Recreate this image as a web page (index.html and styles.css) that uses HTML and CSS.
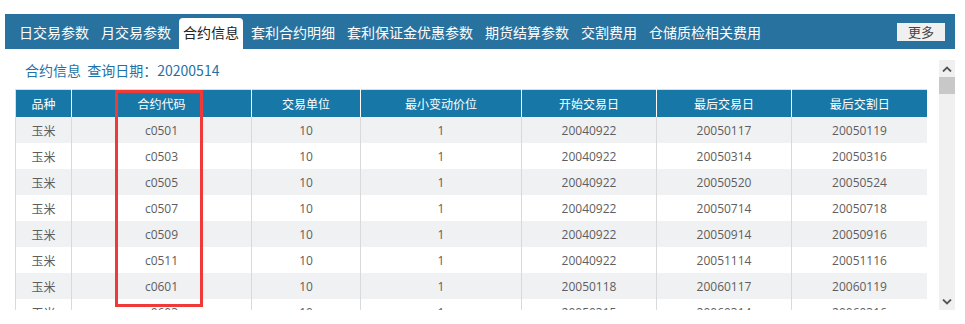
FILE: index.html
```html
<!DOCTYPE html>
<html lang="zh-CN">
<head>
<meta charset="utf-8">
<title>合约信息</title>
<link rel="stylesheet" href="styles.css">
</head>
<body>
<div class="nav">
  <span class="tab">日交易参数</span>
  <span class="tab">月交易参数</span>
  <span class="tab active">合约信息</span>
  <span class="tab">套利合约明细</span>
  <span class="tab">套利保证金优惠参数</span>
  <span class="tab">期货结算参数</span>
  <span class="tab">交割费用</span>
  <span class="tab">仓储质检相关费用</span>
  <span class="more">更多</span>
</div>
<div class="main">
  <div class="content">
    <div class="title">合约信息&nbsp;&nbsp;查询日期：20200514</div>
    <div class="table-wrap">
      <table class="grid">
        <colgroup>
          <col class="c1"><col class="c2"><col class="c3"><col class="c4"><col class="c5"><col class="c6"><col class="c7">
        </colgroup>
        <thead>
          <tr><th>品种</th><th>合约代码</th><th>交易单位</th><th>最小变动价位</th><th>开始交易日</th><th>最后交易日</th><th>最后交割日</th></tr>
        </thead>
        <tbody>
          <tr><td>玉米</td><td>c0501</td><td>10</td><td>1</td><td>20040922</td><td>20050117</td><td>20050119</td></tr>
          <tr><td>玉米</td><td>c0503</td><td>10</td><td>1</td><td>20040922</td><td>20050314</td><td>20050316</td></tr>
          <tr><td>玉米</td><td>c0505</td><td>10</td><td>1</td><td>20040922</td><td>20050520</td><td>20050524</td></tr>
          <tr><td>玉米</td><td>c0507</td><td>10</td><td>1</td><td>20040922</td><td>20050714</td><td>20050718</td></tr>
          <tr><td>玉米</td><td>c0509</td><td>10</td><td>1</td><td>20040922</td><td>20050914</td><td>20050916</td></tr>
          <tr><td>玉米</td><td>c0511</td><td>10</td><td>1</td><td>20040922</td><td>20051114</td><td>20051116</td></tr>
          <tr><td>玉米</td><td>c0601</td><td>10</td><td>1</td><td>20050118</td><td>20060117</td><td>20060119</td></tr>
          <tr><td>玉米</td><td>c0603</td><td>10</td><td>1</td><td>20050315</td><td>20060314</td><td>20060316</td></tr>
          <tr><td>玉米</td><td>c0605</td><td>10</td><td>1</td><td>20050517</td><td>20060516</td><td>20060518</td></tr>
        </tbody>
      </table>
    </div>
  </div>
  <div class="scrollbar">
    <div class="sb-btn"><svg width="10" height="6" viewBox="0 0 10 6"><path d="M1 5.5 L5 1.5 L9 5.5" fill="none" stroke="#555" stroke-width="1.8"/></svg></div>
    <div class="sb-thumb"></div>
    <div class="sb-track"></div>
    <div class="sb-btn"><svg width="10" height="6" viewBox="0 0 10 6"><path d="M1 0.5 L5 4.5 L9 0.5" fill="none" stroke="#555" stroke-width="1.8"/></svg></div>
  </div>
  <div class="highlight"></div>
</div>
</body>
</html>
```

FILE: styles.css
```css
html, body {
  margin: 0;
  padding: 0;
  background: #fff;
  font-family: "Noto Sans CJK SC", "Open Sans", sans-serif;
}

.nav {
  margin: 14px 10px 0 5px;
  height: 35px;
  background: #28729f;
  display: flex;
  align-items: flex-end;
  padding-left: 10px;
  box-sizing: border-box;
}

.tab {
  height: 31px;
  line-height: 29px;
  padding: 0 4px;
  margin-right: 4px;
  color: #fff;
  font-size: 14px;
  white-space: nowrap;
}

.tab.active {
  background: #fff;
  color: #222;
  border-radius: 4px 4px 0 0;
}

.more {
  margin-left: auto;
  align-self: center;
  margin-right: 10px;
  width: 48px;
  height: 18px;
  line-height: 18px;
  text-align: center;
  background: #f0f0f0;
  color: #444;
  font-size: 13px;
  margin-top: 1px;
}

.main {
  position: relative;
  margin: 11px 10px 0 15px;
  height: 250px;
  display: flex;
}

.content {
  flex: 1;
  padding-right: 12px;
  overflow: hidden;
}

.title {
  height: 29px;
  line-height: 20px;
  padding-left: 10px;
  color: #1f72a6;
  font-size: 14px;
}

.table-wrap {
  height: 221px;
  overflow: hidden;
}

.grid {
  width: 912px;
  table-layout: fixed;
  border-collapse: collapse;
  border-top: 1px solid #dcdcdc;
  font-family: "Open Sans", "Noto Sans CJK SC", sans-serif;
  font-size: 12px;
}

.c1 { width: 56px; }
.c2 { width: 180px; }
.c3 { width: 109px; }
.c4 { width: 161px; }
.c5 { width: 135px; }
.c6 { width: 135px; }
.c7 { width: 136px; }

.grid th {
  height: 27px;
  padding: 0;
  background: #1778a8;
  color: #fff;
  font-weight: normal;
  border-left: 1px solid #fff;
  font-family: "Noto Sans CJK SC", sans-serif;
  font-size: 12px;
}

.grid th:first-child {
  border-left: 1px solid #dcdcdc;
}

.grid td {
  height: 26px;
  padding: 0;
  text-align: center;
  color: #5e5e5e;
  border-left: 1px solid #d9d9d9;
  border-right: 1px solid #d9d9d9;
}

.grid td:first-child {
  font-family: "Noto Sans CJK SC", sans-serif;
}

.grid tbody tr:nth-child(odd) td {
  background: #f0f1f3;
}

.scrollbar {
  width: 16px;
  background: #f0f0f0;
  display: flex;
  flex-direction: column;
}

.sb-btn {
  height: 17px;
  display: flex;
  align-items: center;
  justify-content: center;
}

.sb-thumb {
  height: 17px;
  background: #c8c8c8;
}

.sb-track {
  flex: 1;
}

.highlight {
  position: absolute;
  left: 100px;
  top: 30px;
  width: 82px;
  height: 211px;
  border: 3px solid #f03a3a;
  pointer-events: none;
}
```
